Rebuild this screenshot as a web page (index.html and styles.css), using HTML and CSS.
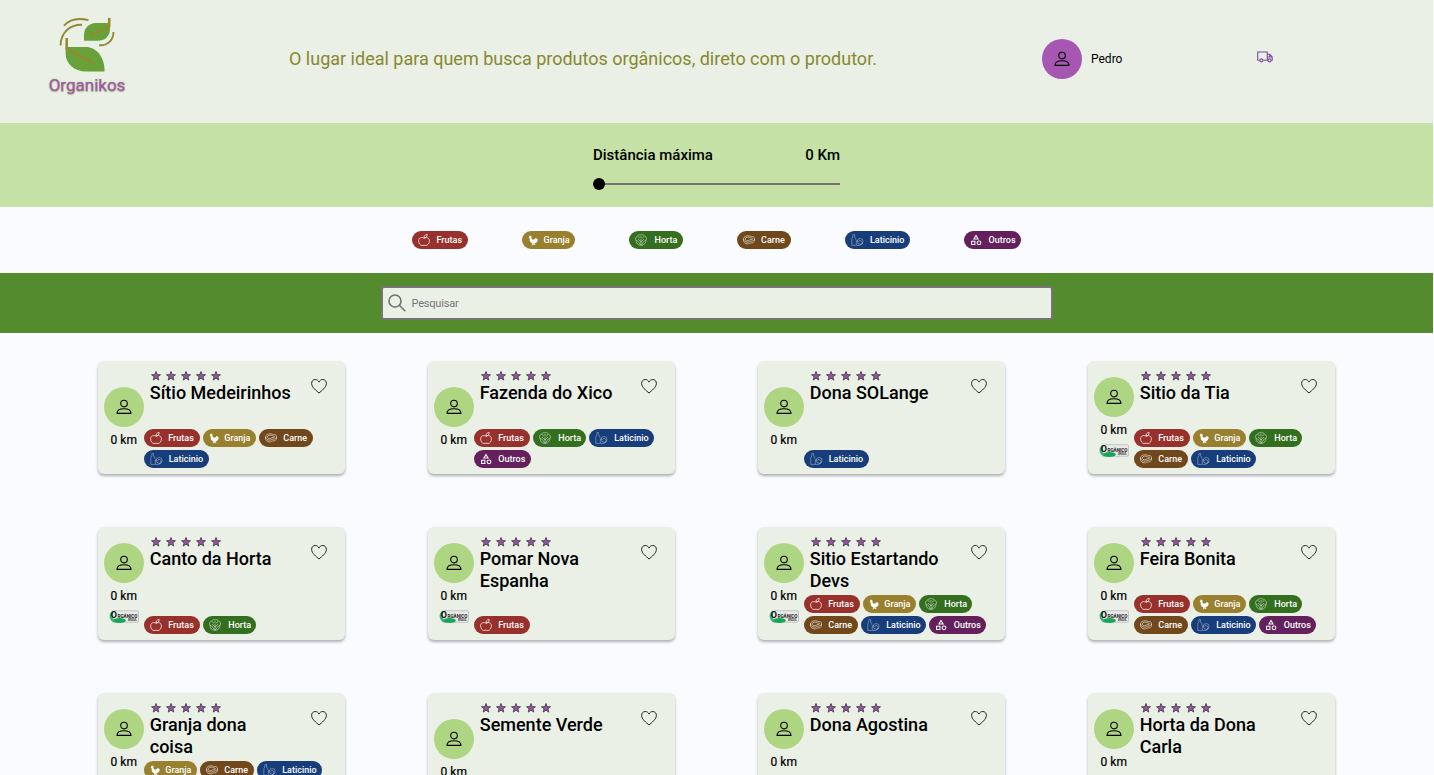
FILE: index.html
```html
<!DOCTYPE html>
<html lang="pt-BR">
<head>
<meta charset="utf-8">
<title>Organikos</title>
<link rel="stylesheet" href="styles.css">
</head>
<body>
<svg class="sprite" aria-hidden="true">
  <symbol id="user" viewBox="0 0 16 16"><g fill="none" stroke="currentColor" stroke-width="1.100"><circle cx="8" cy="4.600" r="3.300"/><path d="M1 14.400c0-3 2.600-4.700 7-4.700s7 1.700 7 4.700z" stroke-linejoin="round"/></g></symbol>
  <symbol id="heart" viewBox="0 0 16 16"><path d="M8 15C5.500 12.800 .6 9.300 .6 5.400c0-2.300 1.600-3.900 3.600-3.900C6 1.500 7.400 2.600 8 4.100c.6-1.500 2-2.600 3.800-2.600 2 0 3.600 1.600 3.600 3.900C15.400 9.300 10.500 12.800 8 15z" fill="none" stroke="#1a1a1a" stroke-width=".95"/></symbol>
  <symbol id="stars" viewBox="0 0 72 12"><g fill="#9b4fab" stroke="#444" stroke-width=".9">
    <path id="st" d="M6 1.500l1.200 3.100 3.300.2-2.600 2 .9 3.300L6 8.200l-2.800 1.900.9-3.300-2.600-2 3.300-.2z"/>
    <use href="#st" x="15"/><use href="#st" x="30"/><use href="#st" x="45"/><use href="#st" x="60"/></g></symbol>
  <symbol id="apple" viewBox="0 0 12 12"><g fill="none" stroke="#fff" stroke-opacity=".9" stroke-width=".8"><path d="M6 4.200C4 3 .7 3.400 .6 6.800c0 2.600 1.600 4.700 3.400 4.700.8 0 1.200-.3 2-.3s1.200.3 2 .3c1.800 0 3.400-2.100 3.400-4.700C11.300 3.400 8 3 6 4.200z"/><path d="M6 4.200C5.800 2 7 .6 9.200.5 9.300 2.500 8 3.800 6 4.200z"/></g></symbol>
  <symbol id="hen" viewBox="0 0 10 12"><path d="M.6 3.700 1.400 2.500 1.600 1.400l.8.500.6-.5.4 1.200.2 2.100c.6.800 1.600 1 2.400.7C7 5 7.300 4.300 7.900 3.900l.3.700.9-.4-.2.900.8.100c-.1 2.100-1 3.600-3.100 4.200L6.300 10.300h1v.7H5.400V9.600h-.6v1.600H3.700v-.6h.4V9.300C2.300 8.400 1.400 7.200 1.700 5.200L1.500 4z" fill="#fff"/></symbol>
  <symbol id="cabbage" viewBox="0 0 12 12"><g fill="none" stroke="#fff" stroke-opacity=".65" stroke-width=".7"><path d="M6 11.500C3 11.300.9 9 1 6.500-.1 4.800.7 2.600 2.600 2.200 3.600.5 5 .3 6 1c1-.7 2.600-.5 3.500 1.200 1.900.5 2.600 2.600 1.500 4.300.1 2.500-2 4.800-5 5z"/><path d="M6 11V4.500M6 8 3 5M6 8l3-3M1 6l3 2.300L5.500 11M11 6 8 8.300 6.500 11M2.700 2.300l1.800 1.500L6 2.500l1.500 1.300 1.800-1.500"/></g></symbol>
  <symbol id="meat" viewBox="0 0 12 12"><g fill="none" stroke="#fff" stroke-opacity=".68" stroke-width=".8"><path d="M.5 5C.5 2.800 3 1.700 5.300 1.800c2 .1 2.700.9 4.200.8 1.500 0 2.100 1.100 2 2.400v1.500c-.2 1.800-1.700 2.500-3.500 2.400-1.300 0-1.700 1-3.400 1C2.300 9.800.6 8.500.5 6.500z"/><path d="M.5 5c.3 2 2 3.100 4 3.100S7 7.100 8 7.100c1.800 0 3.300-.5 3.500-2M2.300 4.900c.2-2 4-2.200 5-1.200.9.700 2.200.1 2.300 1 0 1-1.500.7-2.500 1-1.200.4-1.300 1-2.600 1S2.200 6 2.300 4.900z"/></g></symbol>
  <symbol id="milk" viewBox="0 0 13 12"><g fill="none" stroke="#fff" stroke-opacity=".45" stroke-width=".75"><path d="M1.900.6h1.700v2.200l1.200 2v1M1.900.6v2.200L.8 4.800v6.600h4M5.300 6.500v4.900h4.200"/><circle cx="9.200" cy="7.400" r="2.900"/><path d="M7.300 7.700 9 6.200l2 1.500v2.400l-2 .6M5.300 7H7"/></g></symbol>
  <symbol id="shapes" viewBox="0 0 12 12"><g fill="none" stroke="#fff" stroke-width="1.050"><path d="M6 1.500 8.100 5H3.900z"/><path d="M1.600 7.200h3.300v3.300H1.600z"/><circle cx="9" cy="8.800" r="1.900"/></g></symbol>
  <symbol id="seal" viewBox="0 0 30 14"><rect x="3" y=".7" width="26.500" height="11.600" rx="1.500" fill="#e9eae8" stroke="#aaa" stroke-width=".6"/><path d="M3 1.200C-.6 4 0 9.500 4 11.800L8 13C3.500 10 2.400 5.500 5 1z" fill="#35b073"/><ellipse cx="10.500" cy="10.600" rx="6.300" ry="2.500" fill="#16a856"/><text x="1.800" y="8.200" font-size="9" font-weight="700" fill="#111">O</text><text x="8.500" y="7.600" font-size="5" font-weight="700" fill="#222" textLength="20" lengthAdjust="spacingAndGlyphs">RGÂNICO</text><text x="19" y="11.200" font-size="3.200" font-weight="700" fill="#555" textLength="9">BRASIL</text></symbol>
</svg>

<header class="header">
  <a class="brand">
    <svg class="brand-mark" viewBox="0 0 64 60">
      <g fill="#68a039"><path d="M10.600 31h20c11 0 19 10 19 24.600H31c-12 0-20.400-8-20.400-18z"/><path d="M29 24.800V19c0-7 5-12 12-12h14v6c0 7-5 11.800-12 11.800z"/></g>
      <g fill="none" stroke="#908a30"><path d="M11.700 22v10.500L39 47.700M54.200 2v8.500L35.500 19.500" stroke-width="2.500"/><path d="M5.500 29.500C6 16 15 8.500 27 8.700M9 9.700C15 3 24 1.700 33.500 4.200M58.500 16c0 8.500-6.500 14-14.500 13.200" stroke-width="1.900"/></g>
    </svg>
    <span class="brand-name">Organikos</span>
  </a>
  <p class="slogan">O lugar ideal para quem busca produtos orgânicos, direto com o produtor.</p>
  <div class="account"><span class="avatar avatar-purple"><svg class="icon-user"><use href="#user"/></svg></span><span>Pedro</span></div>
  <svg class="truck" viewBox="0 0 16 12"><g fill="none" stroke="#7b4a9c" stroke-width="1.100"><path d="M2.700 9.200H.7V1h9.600v8.200H6.200M10.300 3.200h2.500L15.200 6v3.200h-1M10.300 6h5M12.700 3.300V6"/><circle cx="4.400" cy="9.400" r="1.500"/><circle cx="12.500" cy="9.400" r="1.500"/></g></svg>
</header>

<section class="distance">
  <div class="distance-labels"><span>Distância máxima</span><span>0 Km</span></div>
  <div class="slider"><span class="thumb"></span></div>
</section>

<nav class="filters">
  <span class="tag frutas"><svg><use href="#apple"/></svg>Frutas</span>
  <span class="tag granja"><svg><use href="#hen"/></svg>Granja</span>
  <span class="tag horta"><svg><use href="#cabbage"/></svg>Horta</span>
  <span class="tag carne"><svg><use href="#meat"/></svg>Carne</span>
  <span class="tag laticinio"><svg><use href="#milk"/></svg>Laticinio</span>
  <span class="tag outros"><svg><use href="#shapes"/></svg>Outros</span>
</nav>

<div class="search">
  <label class="search-box"><svg class="icon-search" viewBox="0 0 18 18"><g fill="none" stroke="#6f756d" stroke-width="1.600"><circle cx="7" cy="7" r="6"/><path d="M11.300 11.300 17.300 17.300"/></g></svg><input type="text" placeholder="Pesquisar"></label>
</div>

<main class="cards">
  <article class="card">
    <div class="side"><span class="avatar"><svg class="icon-user"><use href="#user"/></svg></span><span class="km">0 km</span></div>
    <div class="info"><div class="top"><div><svg class="stars"><use href="#stars"/></svg><h2>Sítio Medeirinhos</h2></div><svg class="heart"><use href="#heart"/></svg></div>
      <div class="tags"><span class="tag frutas"><svg><use href="#apple"/></svg>Frutas</span><span class="tag granja"><svg><use href="#hen"/></svg>Granja</span><span class="tag carne"><svg><use href="#meat"/></svg>Carne</span><span class="tag laticinio"><svg><use href="#milk"/></svg>Laticinio</span></div></div>
  </article>
  <article class="card">
    <div class="side"><span class="avatar"><svg class="icon-user"><use href="#user"/></svg></span><span class="km">0 km</span></div>
    <div class="info"><div class="top"><div><svg class="stars"><use href="#stars"/></svg><h2>Fazenda do Xico</h2></div><svg class="heart"><use href="#heart"/></svg></div>
      <div class="tags"><span class="tag frutas"><svg><use href="#apple"/></svg>Frutas</span><span class="tag horta"><svg><use href="#cabbage"/></svg>Horta</span><span class="tag laticinio"><svg><use href="#milk"/></svg>Laticinio</span><span class="tag outros"><svg><use href="#shapes"/></svg>Outros</span></div></div>
  </article>
  <article class="card">
    <div class="side"><span class="avatar"><svg class="icon-user"><use href="#user"/></svg></span><span class="km">0 km</span></div>
    <div class="info"><div class="top"><div><svg class="stars"><use href="#stars"/></svg><h2>Dona SOLange</h2></div><svg class="heart"><use href="#heart"/></svg></div>
      <div class="tags"><span class="tag laticinio"><svg><use href="#milk"/></svg>Laticinio</span></div></div>
  </article>
  <article class="card">
    <div class="side"><span class="avatar"><svg class="icon-user"><use href="#user"/></svg></span><span class="km">0 km</span><svg class="seal"><use href="#seal"/></svg></div>
    <div class="info"><div class="top"><div><svg class="stars"><use href="#stars"/></svg><h2>Sitio da Tia</h2></div><svg class="heart"><use href="#heart"/></svg></div>
      <div class="tags"><span class="tag frutas"><svg><use href="#apple"/></svg>Frutas</span><span class="tag granja"><svg><use href="#hen"/></svg>Granja</span><span class="tag horta"><svg><use href="#cabbage"/></svg>Horta</span><span class="tag carne"><svg><use href="#meat"/></svg>Carne</span><span class="tag laticinio"><svg><use href="#milk"/></svg>Laticinio</span></div></div>
  </article>

  <article class="card">
    <div class="side"><span class="avatar"><svg class="icon-user"><use href="#user"/></svg></span><span class="km">0 km</span><svg class="seal"><use href="#seal"/></svg></div>
    <div class="info"><div class="top"><div><svg class="stars"><use href="#stars"/></svg><h2>Canto da Horta</h2></div><svg class="heart"><use href="#heart"/></svg></div>
      <div class="tags"><span class="tag frutas"><svg><use href="#apple"/></svg>Frutas</span><span class="tag horta"><svg><use href="#cabbage"/></svg>Horta</span></div></div>
  </article>
  <article class="card">
    <div class="side"><span class="avatar"><svg class="icon-user"><use href="#user"/></svg></span><span class="km">0 km</span><svg class="seal"><use href="#seal"/></svg></div>
    <div class="info"><div class="top"><div><svg class="stars"><use href="#stars"/></svg><h2>Pomar Nova Espanha</h2></div><svg class="heart"><use href="#heart"/></svg></div>
      <div class="tags"><span class="tag frutas"><svg><use href="#apple"/></svg>Frutas</span></div></div>
  </article>
  <article class="card">
    <div class="side"><span class="avatar"><svg class="icon-user"><use href="#user"/></svg></span><span class="km">0 km</span><svg class="seal"><use href="#seal"/></svg></div>
    <div class="info"><div class="top"><div><svg class="stars"><use href="#stars"/></svg><h2>Sitio Estartando Devs</h2></div><svg class="heart"><use href="#heart"/></svg></div>
      <div class="tags"><span class="tag frutas"><svg><use href="#apple"/></svg>Frutas</span><span class="tag granja"><svg><use href="#hen"/></svg>Granja</span><span class="tag horta"><svg><use href="#cabbage"/></svg>Horta</span><span class="tag carne"><svg><use href="#meat"/></svg>Carne</span><span class="tag laticinio"><svg><use href="#milk"/></svg>Laticinio</span><span class="tag outros"><svg><use href="#shapes"/></svg>Outros</span></div></div>
  </article>
  <article class="card">
    <div class="side"><span class="avatar"><svg class="icon-user"><use href="#user"/></svg></span><span class="km">0 km</span><svg class="seal"><use href="#seal"/></svg></div>
    <div class="info"><div class="top"><div><svg class="stars"><use href="#stars"/></svg><h2>Feira Bonita</h2></div><svg class="heart"><use href="#heart"/></svg></div>
      <div class="tags"><span class="tag frutas"><svg><use href="#apple"/></svg>Frutas</span><span class="tag granja"><svg><use href="#hen"/></svg>Granja</span><span class="tag horta"><svg><use href="#cabbage"/></svg>Horta</span><span class="tag carne"><svg><use href="#meat"/></svg>Carne</span><span class="tag laticinio"><svg><use href="#milk"/></svg>Laticinio</span><span class="tag outros"><svg><use href="#shapes"/></svg>Outros</span></div></div>
  </article>

  <article class="card">
    <div class="side"><span class="avatar"><svg class="icon-user"><use href="#user"/></svg></span><span class="km">0 km</span><svg class="seal"><use href="#seal"/></svg></div>
    <div class="info"><div class="top"><div><svg class="stars"><use href="#stars"/></svg><h2>Granja dona coisa</h2></div><svg class="heart"><use href="#heart"/></svg></div>
      <div class="tags"><span class="tag granja"><svg><use href="#hen"/></svg>Granja</span><span class="tag carne"><svg><use href="#meat"/></svg>Carne</span><span class="tag laticinio"><svg><use href="#milk"/></svg>Laticinio</span><span class="tag outros"><svg><use href="#shapes"/></svg>Outros</span></div></div>
  </article>
  <article class="card">
    <div class="side"><span class="avatar"><svg class="icon-user"><use href="#user"/></svg></span><span class="km">0 km</span></div>
    <div class="info"><div class="top"><div><svg class="stars"><use href="#stars"/></svg><h2>Semente Verde</h2></div><svg class="heart"><use href="#heart"/></svg></div></div>
  </article>
  <article class="card">
    <div class="side"><span class="avatar"><svg class="icon-user"><use href="#user"/></svg></span><span class="km">0 km</span><svg class="seal"><use href="#seal"/></svg></div>
    <div class="info"><div class="top"><div><svg class="stars"><use href="#stars"/></svg><h2>Dona Agostina</h2></div><svg class="heart"><use href="#heart"/></svg></div></div>
  </article>
  <article class="card">
    <div class="side"><span class="avatar"><svg class="icon-user"><use href="#user"/></svg></span><span class="km">0 km</span><svg class="seal"><use href="#seal"/></svg></div>
    <div class="info"><div class="top"><div><svg class="stars"><use href="#stars"/></svg><h2>Horta da Dona Carla</h2></div><svg class="heart"><use href="#heart"/></svg></div></div>
  </article>
</main>
</body>
</html>
```
FILE: styles.css
```css
* { box-sizing: border-box; }
html { overflow: hidden; background: #fafbfe; }
body { margin: 0; width: 1433px; height: 775px; overflow: hidden; font-family: Roboto, "Liberation Sans", sans-serif; color: #000; }
svg { display: block; flex: none; }
.sprite { display: none; }

.header { height: 123px; background: #eaf0e6; display: flex; align-items: center; padding: 0 160px 0 50px; }
.brand { width: 74px; display: flex; flex-direction: column; align-items: center; padding-bottom: 14px; }
.brand-mark { width: 64px; height: 60px; margin-left: -1px; }
.brand-name { font-size: 17px; line-height: 18px; font-weight: 400; color: #a254b1; -webkit-text-stroke: .25px #a254b1; text-shadow: 0 1px 1px #a9cc78, 0 0 2px #a9cc78; }
.slogan { margin: 0 0 6px 165px; width: 753px; font-size: 18px; line-height: 22px; color: #87882f; }
.account { width: 215px; display: flex; align-items: center; gap: 9px; font-size: 12px; padding-bottom: 6px; }
.avatar { width: 40px; height: 40px; border-radius: 50%; background: #aed581; display: flex; align-items: center; justify-content: center; }
.avatar-purple { background: #a557b2; }
.icon-user { width: 16px; height: 16px; }
.truck { width: 16px; height: 12px; margin-bottom: 9px; }

.distance { height: 84px; background: #c5e1a5; display: flex; flex-direction: column; align-items: center; padding-top: 22px; }
.distance-labels { width: 247px; display: flex; justify-content: space-between; font-size: 15px; line-height: 20px; font-weight: 500; }
.slider { width: 247px; height: 12px; margin-top: 13px; background: linear-gradient(#757575, #757575) center / 100% 2px no-repeat; }
.thumb { display: block; width: 12px; height: 12px; border-radius: 50%; background: #000; }

.filters { height: 66px; display: flex; align-items: center; justify-content: center; gap: 54px; }
.tag { height: 18px; border-radius: 9px; padding: 0 0 0 6px; display: flex; align-items: center; gap: 6.500px; color: #fff; font-size: 9px; font-weight: 500; line-height: 18px; white-space: nowrap; }
.tag svg { width: 12px; height: 12px; }
.frutas { background: #98302c; width: 56px; }
.granja { background: #98802f; width: 53px; gap: 5.500px; }
.granja svg { width: 10px; }
.horta { background: #346f20; width: 53.500px; gap: 7.500px; }
.carne { background: #70481c; width: 54.500px; }
.laticinio { background: #173e7b; width: 65px; }
.laticinio svg { width: 13px; }
.laticinio { gap: 6px; }
.outros { background: #64205c; width: 57px; }

.search { height: 60px; background: #558b2f; display: flex; align-items: center; justify-content: center; }
.search-box { width: 672px; height: 34px; background: #eaf0e6; border: 2px solid #757575; border-radius: 3px; display: flex; align-items: center; padding-left: 5px; gap: 6px; }
.icon-search { width: 18px; height: 18px; }
.search-box input { flex: 1; border: 0; padding: 0; background: none; outline: 0; font: 11px Roboto, "Liberation Sans", sans-serif; letter-spacing: -.2px; }
.search-box input::placeholder { color: #757575; }

.cards { display: grid; grid-template-columns: repeat(4, 247.500px); gap: 53px 82.500px; justify-content: center; padding-top: 28px; }
.card { height: 113px; background: #eaf0e6; border-radius: 6px; box-shadow: 0 2px 3px rgba(0, 0, 0, .3); display: flex; padding: 6px; }
.side { width: 40px; display: flex; flex-direction: column; align-items: center; justify-content: center; }
.km { font-size: 12px; line-height: 16px; margin-top: 5px; -webkit-text-stroke: .2px #000; }
.seal { width: 30px; height: 14px; margin-top: 6px; font-family: Roboto, sans-serif; }
.info { flex: 1; display: flex; flex-direction: column; justify-content: space-between; }
.top { display: flex; padding-left: 6px; }
.top > div { width: 161px; padding-top: 3px; padding-right: 18px; }
.stars { width: 72px; height: 12px; }
.card h2 { margin: 0; font-size: 18px; line-height: 22px; font-weight: 500; }
.heart { width: 16px; height: 16px; margin-top: 11px; }
.tags { display: flex; flex-wrap: wrap; gap: 3px; }
```
